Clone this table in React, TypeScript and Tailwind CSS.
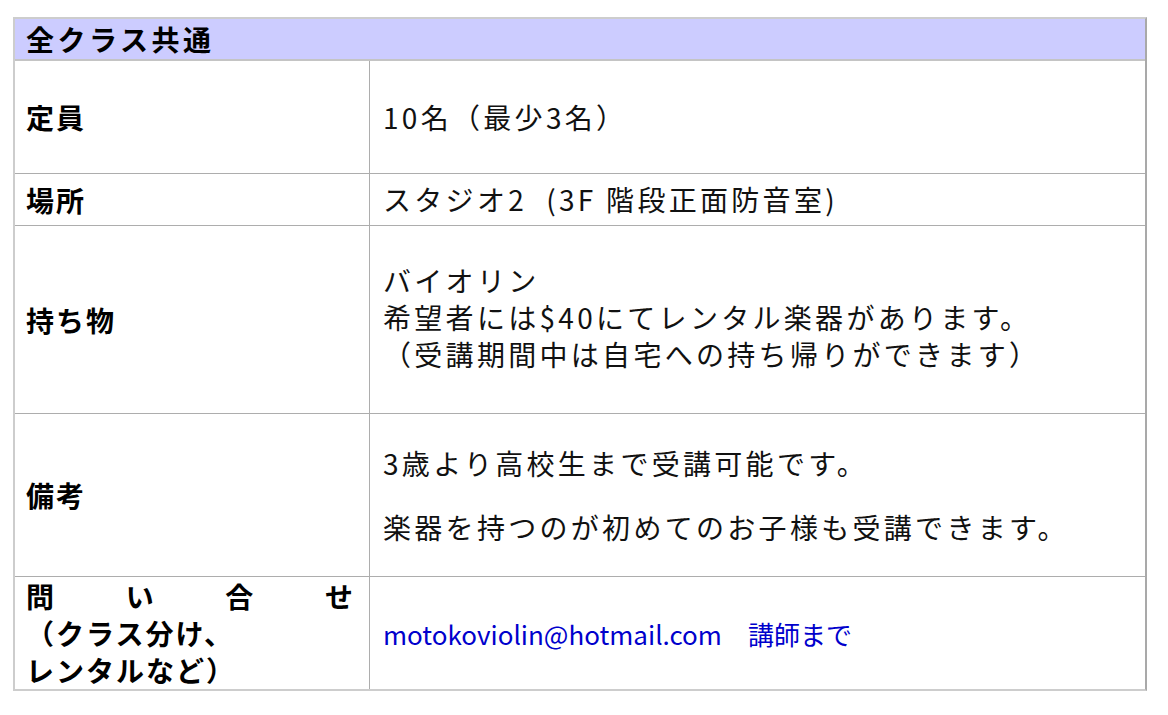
const label = "font-['Noto_Sans_CJK_JP',sans-serif] font-bold text-[28px] tracking-[2px] text-black"
const body = "font-['Noto_Sans_CJK_JP',sans-serif] text-[28px] tracking-[3.3px] text-[#111] leading-[37px]"

function Row({ h, last, left, children }: { h: string; last?: boolean; left: React.ReactNode; children: React.ReactNode }) {
  return (
    <div className={`grid grid-cols-[354px_1fr] ${h} ${last ? '' : 'border-b border-[#adadad]'}`}>
      <div className={`flex items-center pl-[11px] pr-[14px] ${label}`}>{left}</div>
      <div className={`flex items-center border-l border-[#adadad] pl-[13px] ${body}`}>{children}</div>
    </div>
  )
}

export default function App() {
  return (
    <div className="min-h-screen bg-white pl-[13px] pt-[17px]">
      <div className="w-[1134px] border-2 border-[#cdcdcd] border-r-[#a9a9a9]">
        <div className={`flex h-[42px] items-center border-b-2 border-[#c4c4c4] bg-[#ccccff] pl-[11px] ${label} tracking-[3.5px]`}>
          全クラス共通
        </div>

        <Row h="h-[113px]" left="定員">
          <span>10名（最少3名）</span>
        </Row>

        <Row h="h-[52px]" left="場所">
          <span>スタジオ2 &nbsp;(3F 階段正面防音室)</span>
        </Row>

        <Row h="h-[188px]" left="持ち物">
          <div className="-mt-[4px]">
            <div>バイオリン</div>
            <div>希望者には$40にてレンタル楽器があります。</div>
            <div>（受講期間中は自宅への持ち帰りができます）</div>
          </div>
        </Row>

        <Row h="h-[163px]" left="備考">
          <div>
            <p className="mb-[27px]">3歳より高校生まで受講可能です。</p>
            <p>楽器を持つのが初めてのお子様も受講できます。</p>
          </div>
        </Row>

        <Row
          h="h-[112px]"
          last
          left={
            <div className="w-full leading-[37px]">
              <div className="flex justify-between">
                <span>問</span>
                <span>い</span>
                <span>合</span>
                <span>せ</span>
              </div>
              <div>（クラス分け、</div>
              <div>レンタルなど）</div>
            </div>
          }
        >
          <a className="text-[26px] tracking-normal text-[#0000cc]" href="#">
            motokoviolin@hotmail.com　講師まで
          </a>
        </Row>
      </div>
    </div>
  )
}
